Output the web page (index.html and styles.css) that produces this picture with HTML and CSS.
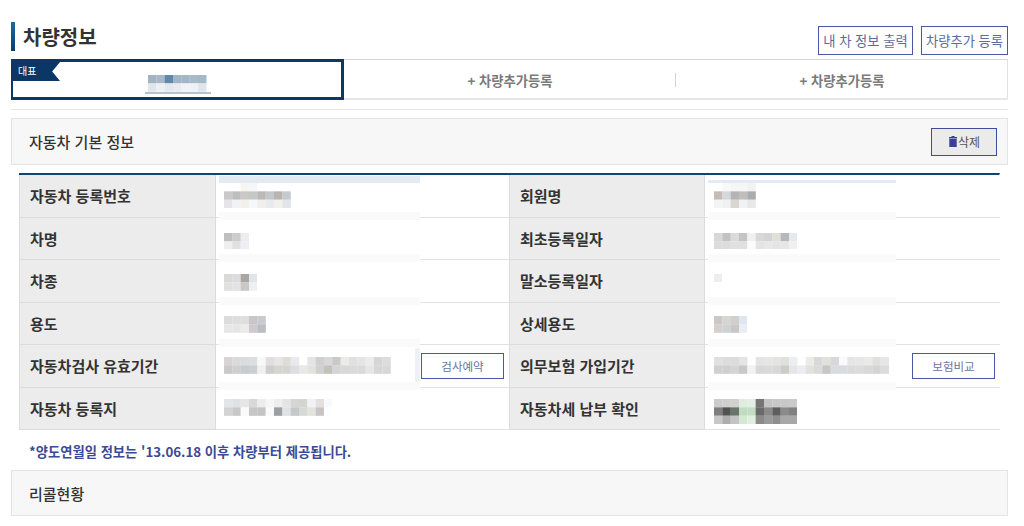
FILE: index.html
```html
<!DOCTYPE html>
<html lang="ko">
<head>
<meta charset="utf-8">
<title>차량정보</title>
<link rel="stylesheet" href="styles.css">
</head>
<body>
<main class="page">
  <header class="head">
    <h1 class="title">차량정보</h1>
    <div class="head-actions">
      <a class="btn btn-print">내 차 정보 출력</a>
      <a class="btn btn-add">차량추가 등록</a>
    </div>
  </header>

  <nav class="tabs">
    <div class="tab tab-on">
      <span class="badge">대표</span>
      <span class="plate">
        <svg class="mosaic" width="58.3" height="16.7" viewBox="0 0 7 2">
          <rect x="0" y="0" fill="#a2b4c4"/><rect x="1" y="0" fill="#a8b8c6"/><rect x="2" y="0" fill="#5f88aa"/><rect x="3" y="0" fill="#9fb5c6"/><rect x="4" y="0" fill="#a2b6c6"/><rect x="5" y="0" fill="#a8bac8"/><rect x="6" y="0" fill="#a4b8c6"/>
          <rect x="0" y="1" fill="#e0e6ec"/><rect x="1" y="1" fill="#eef1f4"/><rect x="2" y="1" fill="#e4e8ee"/><rect x="3" y="1" fill="#e8ecf0"/><rect x="4" y="1" fill="#f0f2f5"/><rect x="5" y="1" fill="#eef2f5"/><rect x="6" y="1" fill="#dfe5ea"/>
        </svg>
      </span>
    </div>
    <div class="tab tab-add"><span>+ 차량추가등록</span></div>
    <div class="tab tab-add tab-last"><span>+ 차량추가등록</span></div>
  </nav>

  <hr class="rule">

  <section class="panel">
    <h2 class="panel-title">자동차 기본 정보</h2>
    <button class="btn-del" type="button">
      <svg class="trash" width="10" height="11" viewBox="0 0 10 11"><path d="M3.5 0h3v1H9v1.4H1V1h2.500zM1.300 3h7.400v8H1.300z"/></svg>삭제
    </button>
  </section>

  <section class="info">
    <div class="th">자동차 등록번호</div>
    <div class="td mask-top-l">
      <svg class="mosaic r1" width="66.64" height="25" viewBox="0 0 8 3">
        <rect x="2" y="0" fill="#f7f5f2"/><rect x="3" y="0" fill="#f4f6f8"/>
        <rect x="0" y="1" fill="#c9c9c9"/><rect x="1" y="1" fill="#bdbfbe"/><rect x="2" y="1" fill="#c9c8c6"/><rect x="3" y="1" fill="#c6c8c8"/><rect x="4" y="1" fill="#bcb8b7"/><rect x="5" y="1" fill="#c6c7ca"/><rect x="6" y="1" fill="#b9b4b2"/><rect x="7" y="1" fill="#c4cad0"/>
        <rect x="0" y="2" fill="#e6e4e6"/><rect x="1" y="2" fill="#f0f2f3"/><rect x="2" y="2" fill="#f3f0ec"/><rect x="3" y="2" fill="#f5f8fb"/><rect x="4" y="2" fill="#f1efec"/><rect x="5" y="2" fill="#e9eaed"/><rect x="6" y="2" fill="#f2f0ed"/><rect x="7" y="2" fill="#e2e4e7"/>
      </svg>
    </div>
    <div class="th">회원명</div>
    <div class="td td-r mask-top-r">
      <svg class="mosaic r1" width="41.65" height="25" viewBox="0 0 5 3">
        <rect x="1" y="0" fill="#f8f8f8"/><rect x="2" y="0" fill="#f6f6f6"/><rect x="3" y="0" fill="#f6f6f6"/><rect x="4" y="0" fill="#f2f2f2"/>
        <rect x="0" y="1" fill="#c4bcb6"/><rect x="1" y="1" fill="#d4d8da"/><rect x="2" y="1" fill="#b4b4b4"/><rect x="3" y="1" fill="#c0bdbd"/><rect x="4" y="1" fill="#a8abb0"/>
        <rect x="0" y="2" fill="#f4f4f4"/><rect x="1" y="2" fill="#f0f0f0"/><rect x="2" y="2" fill="#d8d6d0"/><rect x="3" y="2" fill="#f0f3f5"/><rect x="4" y="2" fill="#e8e8e8"/>
      </svg>
    </div>

    <div class="th">차명</div>
    <div class="td mask-l">
      <svg class="mosaic r2" width="25" height="16.66" viewBox="0 0 3 2">
        <rect x="0" y="0" fill="#c2bdbe"/><rect x="1" y="0" fill="#cdcccc"/><rect x="2" y="0" fill="#ecedf1"/>
        <rect x="0" y="1" fill="#efeded"/><rect x="1" y="1" fill="#e1e0e0"/><rect x="2" y="1" fill="#eeeff2"/>
      </svg>
    </div>
    <div class="th">최초등록일자</div>
    <div class="td td-r mask-r">
      <svg class="mosaic r2" width="83.3" height="16.66" viewBox="0 0 10 2">
        <rect x="0" y="0" fill="#d8d8d8"/><rect x="1" y="0" fill="#c4c2c0"/><rect x="2" y="0" fill="#d8dcdc"/><rect x="3" y="0" fill="#c4c4c4"/><rect x="4" y="0" fill="#f0f0f0"/><rect x="5" y="0" fill="#d8d8d8"/><rect x="6" y="0" fill="#d4d4d4"/><rect x="7" y="0" fill="#e0e0da"/><rect x="8" y="0" fill="#b8b8ba"/><rect x="9" y="0" fill="#e6e8ee"/>
        <rect x="0" y="1" fill="#dcdcdc"/><rect x="1" y="1" fill="#dcdcdc"/><rect x="2" y="1" fill="#e0e0e0"/><rect x="3" y="1" fill="#e0e0de"/><rect x="4" y="1" fill="#fbfbfb"/><rect x="5" y="1" fill="#e4e4e4"/><rect x="6" y="1" fill="#e8e8e8"/><rect x="7" y="1" fill="#e4e4e4"/><rect x="8" y="1" fill="#e6e6e6"/><rect x="9" y="1" fill="#f0f0f2"/>
      </svg>
    </div>

    <div class="th">차종</div>
    <div class="td mask-l">
      <svg class="mosaic r3" width="33.32" height="16.66" viewBox="0 0 4 2">
        <rect x="0" y="0" fill="#d9d9d7"/><rect x="1" y="0" fill="#dcdcdc"/><rect x="2" y="0" fill="#aaa6a5"/><rect x="3" y="0" fill="#e0e5ea"/>
        <rect x="0" y="1" fill="#e0e0df"/><rect x="1" y="1" fill="#e2e3e6"/><rect x="2" y="1" fill="#c9c8c5"/><rect x="3" y="1" fill="#eef0f3"/>
      </svg>
    </div>
    <div class="th">말소등록일자</div>
    <div class="td td-r mask-r">
      <svg class="mosaic r3" width="8.33" height="8.33" viewBox="0 0 1 1"><rect x="0" y="0" fill="#eeeeee"/></svg>
    </div>

    <div class="th">용도</div>
    <div class="td mask-l">
      <svg class="mosaic r4" width="41.65" height="16.66" viewBox="0 0 5 2">
        <rect x="0" y="0" fill="#dcdcdc"/><rect x="1" y="0" fill="#dedede"/><rect x="2" y="0" fill="#dfe0de"/><rect x="3" y="0" fill="#c9c5ca"/><rect x="4" y="0" fill="#c9cccf"/>
        <rect x="0" y="1" fill="#e8e7e8"/><rect x="1" y="1" fill="#e6e6e6"/><rect x="2" y="1" fill="#ebece8"/><rect x="3" y="1" fill="#cdcacd"/><rect x="4" y="1" fill="#bcbdc2"/>
      </svg>
    </div>
    <div class="th">상세용도</div>
    <div class="td td-r mask-r">
      <svg class="mosaic r4" width="33.32" height="16.66" viewBox="0 0 4 2">
        <rect x="0" y="0" fill="#cdc8c6"/><rect x="1" y="0" fill="#d8d4d2"/><rect x="2" y="0" fill="#cfcfcf"/><rect x="3" y="0" fill="#e0e6ee"/>
        <rect x="0" y="1" fill="#d4d0cd"/><rect x="1" y="1" fill="#cfd2d4"/><rect x="2" y="1" fill="#cbc7c4"/><rect x="3" y="1" fill="#e8eef4"/>
      </svg>
    </div>

    <div class="th">자동차검사 유효기간</div>
    <div class="td td-action mask-l">
      <svg class="mosaic r5" width="175" height="16.66" viewBox="0 0 21 2">
        <rect x="0" y="0" fill="#d8d4d3"/><rect x="1" y="0" fill="#dadada"/><rect x="2" y="0" fill="#d8dcdf"/><rect x="3" y="0" fill="#dcdee0"/><rect x="4" y="0" fill="#f8f8f8"/><rect x="5" y="0" fill="#e0dfdd"/><rect x="6" y="0" fill="#e8e6e4"/><rect x="7" y="0" fill="#dedcd6"/><rect x="8" y="0" fill="#e8e9ec"/><rect x="10" y="0" fill="#e6e4e2"/><rect x="11" y="0" fill="#d0cfcf"/><rect x="12" y="0" fill="#d8d8d8"/><rect x="13" y="0" fill="#c9c9c9"/><rect x="14" y="0" fill="#ecebe8"/><rect x="15" y="0" fill="#e0e0e0"/><rect x="16" y="0" fill="#e4e4e4"/><rect x="17" y="0" fill="#ececec"/><rect x="18" y="0" fill="#d6d6d6"/><rect x="19" y="0" fill="#dcdcdc"/>
        <rect x="0" y="1" fill="#ccc8c6"/><rect x="1" y="1" fill="#cfcfcf"/><rect x="2" y="1" fill="#c6cbcf"/><rect x="3" y="1" fill="#ccced0"/><rect x="4" y="1" fill="#eef0f2"/><rect x="5" y="1" fill="#cfcdcb"/><rect x="6" y="1" fill="#d4d4d0"/><rect x="7" y="1" fill="#d6d4d0"/><rect x="8" y="1" fill="#dcdee2"/><rect x="9" y="1" fill="#e8e8ea"/><rect x="10" y="1" fill="#e4e2dc"/><rect x="11" y="1" fill="#d0d0d0"/><rect x="12" y="1" fill="#c4c0bc"/><rect x="13" y="1" fill="#d4d4d8"/><rect x="14" y="1" fill="#d8d8d8"/><rect x="15" y="1" fill="#dadada"/><rect x="16" y="1" fill="#dcdad8"/><rect x="17" y="1" fill="#e6e6e4"/><rect x="18" y="1" fill="#d6d6d6"/><rect x="19" y="1" fill="#d8d8d8"/>
      </svg>
      <span class="side-strip"></span>
      <a class="btn btn-row">검사예약</a>
    </div>
    <div class="th">의무보험 가입기간</div>
    <div class="td td-r td-action mask-r">
      <svg class="mosaic r5" width="175" height="16.66" viewBox="0 0 21 2">
        <rect x="0" y="0" fill="#e0e0e0"/><rect x="1" y="0" fill="#dcdcdc"/><rect x="2" y="0" fill="#dcdcdc"/><rect x="3" y="0" fill="#e4e4e4"/><rect x="5" y="0" fill="#e4e4e4"/><rect x="6" y="0" fill="#e6e6e6"/><rect x="7" y="0" fill="#e4e4e2"/><rect x="8" y="0" fill="#e0e0de"/><rect x="9" y="0" fill="#eceef2"/><rect x="11" y="0" fill="#ecebe8"/><rect x="12" y="0" fill="#d8d8d8"/><rect x="13" y="0" fill="#e0e0dc"/><rect x="14" y="0" fill="#d8d8d8"/><rect x="15" y="0" fill="#fafafc"/><rect x="16" y="0" fill="#e6e6e6"/><rect x="17" y="0" fill="#e6e6e6"/><rect x="18" y="0" fill="#eaeae6"/><rect x="19" y="0" fill="#e0e0e0"/><rect x="20" y="0" fill="#e6e6e6"/>
        <rect x="0" y="1" fill="#d0d0d0"/><rect x="1" y="1" fill="#cfcfcf"/><rect x="2" y="1" fill="#d4d4d4"/><rect x="3" y="1" fill="#c8c8c8"/><rect x="4" y="1" fill="#f2f2f2"/><rect x="5" y="1" fill="#d8d8d8"/><rect x="6" y="1" fill="#dadada"/><rect x="7" y="1" fill="#d8d8d8"/><rect x="8" y="1" fill="#ccccca"/><rect x="9" y="1" fill="#e4e6e9"/><rect x="10" y="1" fill="#ecedf0"/><rect x="11" y="1" fill="#e4e0dc"/><rect x="12" y="1" fill="#d8dadc"/><rect x="13" y="1" fill="#c8c6c4"/><rect x="14" y="1" fill="#d8dce0"/><rect x="15" y="1" fill="#d8dce0"/><rect x="16" y="1" fill="#dadada"/><rect x="17" y="1" fill="#dcdcdc"/><rect x="18" y="1" fill="#d8d8d8"/><rect x="19" y="1" fill="#d4d4d4"/><rect x="20" y="1" fill="#dcdcdc"/>
      </svg>
      <a class="btn btn-row">보험비교</a>
    </div>

    <div class="th">자동차 등록지</div>
    <div class="td mask-l">
      <svg class="mosaic r6" width="108.3" height="16.66" viewBox="0 0 13 2">
        <rect x="0" y="0" fill="#e2e6e8"/><rect x="1" y="0" fill="#dfe2e4"/><rect x="2" y="0" fill="#e6e6e6"/><rect x="3" y="0" fill="#d8d8d8"/><rect x="4" y="0" fill="#ececec"/><rect x="5" y="0" fill="#f6f6f6"/><rect x="6" y="0" fill="#eeeeee"/><rect x="7" y="0" fill="#e4e4e4"/><rect x="8" y="0" fill="#d6d6d4"/><rect x="9" y="0" fill="#d4d4d0"/><rect x="10" y="0" fill="#f0f2f4"/><rect x="11" y="0" fill="#e4dede"/><rect x="12" y="0" fill="#f6fafd"/>
        <rect x="0" y="1" fill="#d4d2d2"/><rect x="1" y="1" fill="#c8c8c8"/><rect x="2" y="1" fill="#fafafa"/><rect x="3" y="1" fill="#c8c6c4"/><rect x="4" y="1" fill="#c4c4c2"/><rect x="5" y="1" fill="#fafafa"/><rect x="6" y="1" fill="#9b9ea2"/><rect x="7" y="1" fill="#dfe2e4"/><rect x="8" y="1" fill="#c4c8c8"/><rect x="9" y="1" fill="#d8d8d4"/><rect x="10" y="1" fill="#e2e2de"/><rect x="11" y="1" fill="#c8c4c4"/><rect x="12" y="1" fill="#fdfefe"/>
      </svg>
    </div>
    <div class="th">자동차세 납부 확인</div>
    <div class="td td-r mask-r">
      <svg class="mosaic r6" width="83.3" height="25" viewBox="0 0 10 3">
        <rect x="0" y="0" fill="#cccccc"/><rect x="1" y="0" fill="#cfcfcf"/><rect x="2" y="0" fill="#d0d0d0"/><rect x="3" y="0" fill="#e0ece0"/><rect x="4" y="0" fill="#e4eee4"/><rect x="5" y="0" fill="#757575"/><rect x="6" y="0" fill="#c4c4c4"/><rect x="7" y="0" fill="#c8c8c8"/><rect x="8" y="0" fill="#c8c8c8"/><rect x="9" y="0" fill="#cacaca"/>
        <rect x="0" y="1" fill="#7e7e7e"/><rect x="1" y="1" fill="#525252"/><rect x="2" y="1" fill="#6a746a"/><rect x="3" y="1" fill="#c0dcc0"/><rect x="4" y="1" fill="#c4dcc4"/><rect x="5" y="1" fill="#6a6a6a"/><rect x="6" y="1" fill="#8a8a8a"/><rect x="7" y="1" fill="#5e5e5e"/><rect x="8" y="1" fill="#8a8a8a"/><rect x="9" y="1" fill="#808080"/>
        <rect x="0" y="2" fill="#c8c8c8"/><rect x="1" y="2" fill="#aeaeae"/><rect x="2" y="2" fill="#c4c4c4"/><rect x="3" y="2" fill="#d4e8d4"/><rect x="4" y="2" fill="#e0f0e0"/><rect x="5" y="2" fill="#8a8a8a"/><rect x="6" y="2" fill="#9a9a9a"/><rect x="7" y="2" fill="#8e8e8e"/><rect x="8" y="2" fill="#a8a8a8"/><rect x="9" y="2" fill="#a8a8a8"/>
      </svg>
    </div>
  </section>

  <p class="note">*양도연월일 정보는 '13.06.18 이후 차량부터 제공됩니다.</p>

  <section class="panel panel-recall">
    <h2 class="panel-title">리콜현황</h2>
  </section>
</main>
</body>
</html>
```

FILE: styles.css
```css
* { box-sizing: border-box; }

html, body { margin: 0; background: #fff; }

body {
  font-family: "Noto Sans CJK KR", "Noto Sans", sans-serif;
  color: #333;
  overflow: hidden;
}

.page { width: 997px; height: 526px; margin-left: 11px; }

.head {
  display: flex;
  justify-content: space-between;
  align-items: flex-start;
  height: 59px;
  padding-top: 22px;
}

.title {
  margin: 0;
  height: 29px;
  padding-left: 8px;
  border-left: 4px solid #114b7e;
  border-image: linear-gradient(#1f6ba5, #0b3a68) 1;
  font-size: 20px;
  line-height: 29px;
  font-weight: 700;
  color: #333;
}

.head-actions { display: flex; gap: 8px; margin-top: 4px; }

.btn {
  display: flex;
  align-items: center;
  justify-content: center;
  border: 1px solid #4a57a6;
  background: #fff;
  font-size: 13.3px;
  color: #5f6b9c;
}

.btn-print { width: 95px; height: 29px; }
.btn-add { width: 87px; height: 29px; }

.btn-row {
  position: absolute;
  top: 8px;
  right: 5px;
  width: 83px;
  height: 26px;
  font-size: 11.5px;
  color: #6a75a0;
}

.tabs {
  display: grid;
  grid-template-columns: 333px 332px 332px;
  height: 41px;
  border-top: 1px solid #d6d6d9;
  border-bottom: 2px solid #e6e6e8;
  border-right: 1px solid #e2e2e4;
}

.tab { position: relative; display: flex; align-items: center; justify-content: center; }

.tab-on {
  height: 41px;
  margin-top: -1px;
  border: solid #0c3867;
  border-width: 3px 3px 3px 2px;
}

.badge {
  position: absolute;
  left: -2px;
  top: 0;
  width: 49px;
  height: 19px;
  padding-left: 7px;
  background: #0a3766;
  color: #fff;
  font-size: 10px;
  line-height: 17px;
  clip-path: polygon(0 0, 100% 0, 84% 50%, 100% 100%, 0 100%);
}

.plate {
  display: block;
  width: 66px;
  margin: 10px 0 0 1px;
  border-bottom: 2px solid #b3c3d2;
  line-height: 0;
}

.plate .mosaic { margin: 0 auto; }

.tab-add {
  font-size: 13.3px;
  font-weight: 700;
  color: #7a7a7a;
}

.tab-add::after {
  content: "";
  position: absolute;
  right: 0;
  top: 13px;
  height: 14px;
  border-right: 1px solid #d4d4d4;
}

.tab-last::after { display: none; }

.rule {
  height: 1px;
  margin: 9px 0 0;
  border: 0;
  background: #e4e4e4;
}

.panel {
  display: flex;
  align-items: center;
  justify-content: space-between;
  height: 47px;
  margin-top: 8px;
  padding: 0 10px 0 17px;
  background: #f7f7f7;
  border: 1px solid #e4e4e4;
}

.panel-title {
  margin: 0;
  font-size: 15px;
  font-weight: 500;
  color: #333;
}

.btn-del {
  display: flex;
  align-items: center;
  justify-content: center;
  width: 66px;
  height: 28px;
  padding: 0;
  background: #ebebeb;
  border: 1px solid #3e4c9c;
  font: 12px "Noto Sans CJK KR", sans-serif;
  color: #555;
}

.trash { fill: #3a3f98; }

.info {
  display: grid;
  grid-template-columns: 197px 293px 196px 295px;
  grid-auto-rows: 42.5px;
  width: 981px;
  margin: 8px 0 0 8px;
  border-top: 2px solid #0f4473;
  border-right: 1px solid #d4d4d4;
}

.th {
  display: flex;
  align-items: center;
  padding-left: 10px;
  background: #ececec;
  border-left: 1px solid #dcdcdc;
  border-right: 1px solid #dcdcdc;
  border-bottom: 1px solid #dcdcdc;
  font-size: 15px;
  font-weight: 700;
  color: #333;
}

.td {
  position: relative;
  padding-left: 8px;
  background: #fff;
  border-bottom: 1px solid #e2e2e2;
  line-height: 0;
}

.td-r { padding-left: 9px; }

.td::before {
  content: "";
  position: absolute;
  top: -6px;
  height: 8px;
  background: #fafafa;
}

.mask-l::before { left: 3px; width: 201px; }
.mask-r::before { left: 3px; width: 188px; }

.mask-top-l::before { top: 1px; height: 7px; left: 3px; width: 201px; background: #e4eaf1; }
.mask-top-r::before { top: 5px; height: 3px; left: 3px; width: 188px; background: #e4eaf1; }

.mosaic { display: block; filter: blur(0.4px); }
.mosaic rect { width: 1.02px; height: 1.02px; }

.r1 { margin-top: 7.6px; }
.r2 { margin-top: 15px; }
.r3 { margin-top: 14px; }
.r4 { margin-top: 13.5px; }
.r5 { margin-top: 12px; }
.r6 { margin-top: 11.5px; }

.side-strip {
  position: absolute;
  left: 199px;
  top: 3px;
  width: 5px;
  height: 35px;
  background: #eef1f7;
}

.note {
  margin: 13px 0 0 18px;
  font-size: 13.3px;
  line-height: 18px;
  font-weight: 700;
  color: #3b4a96;
}

.panel-recall { margin-top: 9px; height: 46px; }
```
